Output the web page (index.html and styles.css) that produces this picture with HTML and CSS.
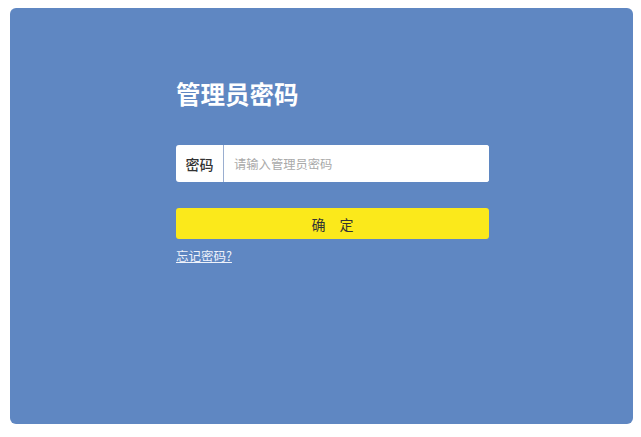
FILE: index.html
```html
<!DOCTYPE html>
<html lang="zh-CN">
<head>
<meta charset="utf-8">
<title>管理员密码</title>
<link rel="stylesheet" href="styles.css">
</head>
<body>
<div class="panel">
  <div class="form">
    <h1 class="title">管理员密码</h1>
    <div class="field">
      <span class="label">密码</span>
      <input class="input" type="password" placeholder="请输入管理员密码">
    </div>
    <button class="submit" type="button">确　定</button>
    <a class="forgot" href="#">忘记密码?</a>
  </div>
</div>
</body>
</html>
```

FILE: styles.css
```css
html, body {
  margin: 0;
  padding: 0;
  background: #ffffff;
}
body {
  padding: 8px 8px 13px 10px;
  font-family: "Noto Sans CJK SC", "Noto Sans", sans-serif;
}
.panel {
  height: 416px;
  background: #5f87c2;
  border-radius: 6px;
  padding: 0 0 0 166px;
  box-sizing: border-box;
  overflow: hidden;
}
.form {
  width: 313px;
  padding-top: 70px;
  display: flex;
  flex-direction: column;
}
.title {
  margin: 0;
  font-size: 24.5px;
  line-height: 32px;
  font-weight: 700;
  color: #ffffff;
}
.field {
  margin-top: 35px;
  height: 37px;
  display: flex;
  background: #ffffff;
  border-radius: 3px;
  overflow: hidden;
}
.label {
  width: 48px;
  flex: none;
  display: flex;
  align-items: center;
  justify-content: center;
  font-size: 14px;
  font-weight: 500;
  color: #333333;
  border-right: 1px solid #9aaed0;
  box-sizing: border-box;
}
.input {
  flex: 1;
  border: none;
  outline: none;
  padding: 0 0 0 10px;
  font-family: inherit;
  font-size: 12.3px;
  color: #333333;
  background: #ffffff;
}
.input::placeholder {
  color: #a9a9a9;
}
.submit {
  margin-top: 26px;
  height: 31px;
  border: none;
  border-radius: 3px;
  background: #fbe91b;
  font-family: inherit;
  font-size: 14px;
  color: #333333;
  padding: 0;
}
.forgot {
  margin-top: 8px;
  align-self: flex-start;
  font-size: 12.5px;
  line-height: 18px;
  color: #eef2fa;
  text-decoration: underline;
}
```
